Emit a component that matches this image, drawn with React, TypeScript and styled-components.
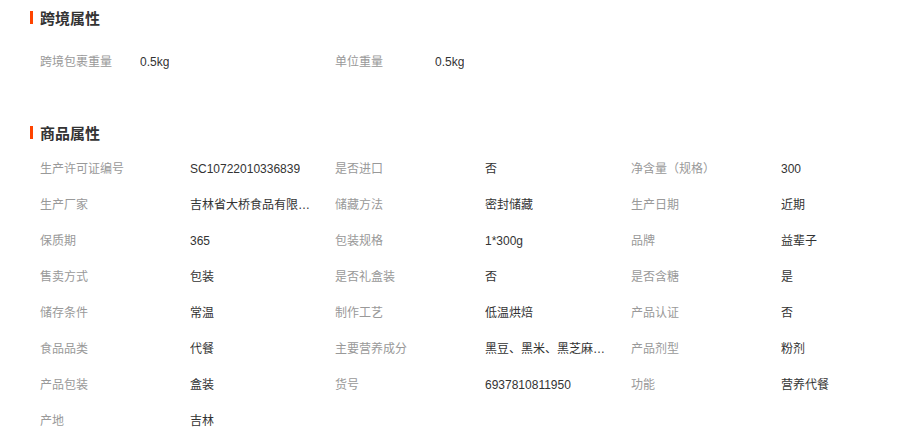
import React from "react";
import styled, { createGlobalStyle } from "styled-components";

const GlobalStyle = createGlobalStyle`
  html, body {
    margin: 0;
    padding: 0;
    background: #fff;
    overflow: hidden;
  }
  body {
    font-family: "Liberation Sans", "Noto Sans CJK SC", sans-serif;
    font-size: 12px;
    color: #333;
  }
`;

const Page = styled.div`
  width: 904px;
  padding-top: 2px;
`;

const Section = styled.section`
  & + & {
    margin-top: 37px;
  }
`;

const Title = styled.h3`
  margin: 0;
  padding-left: 30px;
  height: 30px;
  display: flex;
  align-items: center;
  gap: 7px;
  font-size: 15px;
  font-weight: 700;
  color: #333;

  &::before {
    content: "";
    display: block;
    width: 3px;
    height: 13px;
    background: #ff4400;
  }
`;

const Grid = styled.div<{ $top: number }>`
  display: grid;
  grid-template-columns: 295px 296px 1fr;
  padding: ${({ $top }) => $top}px 0 0 40px;
`;

const Cell = styled.div`
  height: 36px;
  line-height: 36px;
  white-space: nowrap;
`;

const Label = styled.span<{ $w: number }>`
  display: inline-block;
  vertical-align: top;
  width: ${({ $w }) => $w}px;
  color: #999;
`;

const Value = styled.span`
  display: inline-block;
  vertical-align: top;
  max-width: 122px;
  overflow: hidden;
  text-overflow: ellipsis;
  color: #333;
`;

type Attr = [string, string];

const crossBorder: Attr[] = [
  ["跨境包裹重量", "0.5kg"],
  ["单位重量", "0.5kg"],
];

const goods: Attr[] = [
  ["生产许可证编号", "SC10722010336839"],
  ["是否进口", "否"],
  ["净含量（规格）", "300"],
  ["生产厂家", "吉林省大桥食品有限公司"],
  ["储藏方法", "密封储藏"],
  ["生产日期", "近期"],
  ["保质期", "365"],
  ["包装规格", "1*300g"],
  ["品牌", "益辈子"],
  ["售卖方式", "包装"],
  ["是否礼盒装", "否"],
  ["是否含糖", "是"],
  ["储存条件", "常温"],
  ["制作工艺", "低温烘焙"],
  ["产品认证", "否"],
  ["食品品类", "代餐"],
  ["主要营养成分", "黑豆、黑米、黑芝麻、核桃"],
  ["产品剂型", "粉剂"],
  ["产品包装", "盒装"],
  ["货号", "6937810811950"],
  ["功能", "营养代餐"],
  ["产地", "吉林"],
];

function AttrGrid({ items, labelWidth, top }: { items: Attr[]; labelWidth: number; top: number }) {
  return (
    <Grid $top={top}>
      {items.map(([k, v]) => (
        <Cell key={k}>
          <Label $w={labelWidth}>{k}</Label>
          <Value title={v}>{v}</Value>
        </Cell>
      ))}
    </Grid>
  );
}

export default function App() {
  return (
    <Page>
      <GlobalStyle />
      <Section>
        <Title>跨境属性</Title>
        <AttrGrid items={crossBorder} labelWidth={100} top={12} />
      </Section>
      <Section>
        <Title>商品属性</Title>
        <AttrGrid items={goods} labelWidth={150} top={4} />
      </Section>
    </Page>
  );
}
